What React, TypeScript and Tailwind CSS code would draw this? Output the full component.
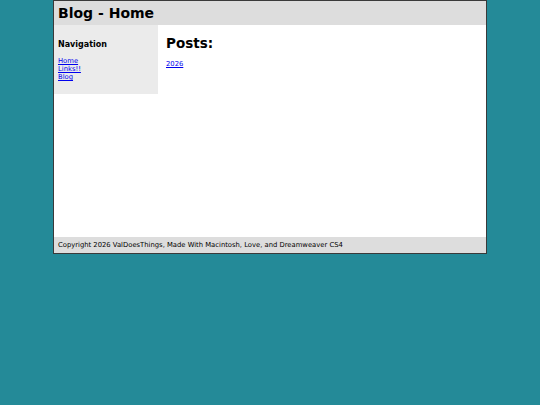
export default function App() {
  return (
    <div className="min-h-[405px] bg-[#248a98] font-['DejaVu_Sans',Verdana,sans-serif] text-black">
      <div className="mx-auto w-[434px] border border-[#3a3a3a]">
        {/* header */}
        <div className="flex h-[24px] items-center bg-[#dddddd] px-[4px]">
          <h1 className="text-[14px] font-bold leading-none">Blog - Home</h1>
        </div>

        <div className="flex h-[212px] bg-white">
          {/* sidebar */}
          <div className="w-[104px] self-start bg-[#ebebeb] px-[4px] pt-[15px] pb-[13px]">
            <h3 className="text-[8px] font-bold leading-[10px]">Navigation</h3>
            <ul className="mt-[7px] text-[6.8px] leading-[8px]">
              <li><a href="#" className="text-[#0000ee] underline">Home</a></li>
              <li><a href="#" className="text-[#0000ee] underline">Links!!</a></li>
              <li><a href="#" className="text-[#0000ee] underline">Blog</a></li>
            </ul>
          </div>

          {/* content */}
          <div className="flex-1 pl-[8px] pt-[10px]">
            <h2 className="text-[13.5px] font-bold leading-[16px]">Posts:</h2>
            <p className="mt-[9px] text-[6.8px] leading-[8px]">
              <a href="#" className="text-[#0000ee] underline">2026</a>
            </p>
          </div>
        </div>

        {/* footer */}
        <div className="flex h-[16px] items-center bg-[#dddddd] px-[4px] text-[6.8px]">
          Copyright 2026 ValDoesThings, Made With Macintosh, Love, and Dreamweaver CS4
        </div>
      </div>
    </div>
  )
}
